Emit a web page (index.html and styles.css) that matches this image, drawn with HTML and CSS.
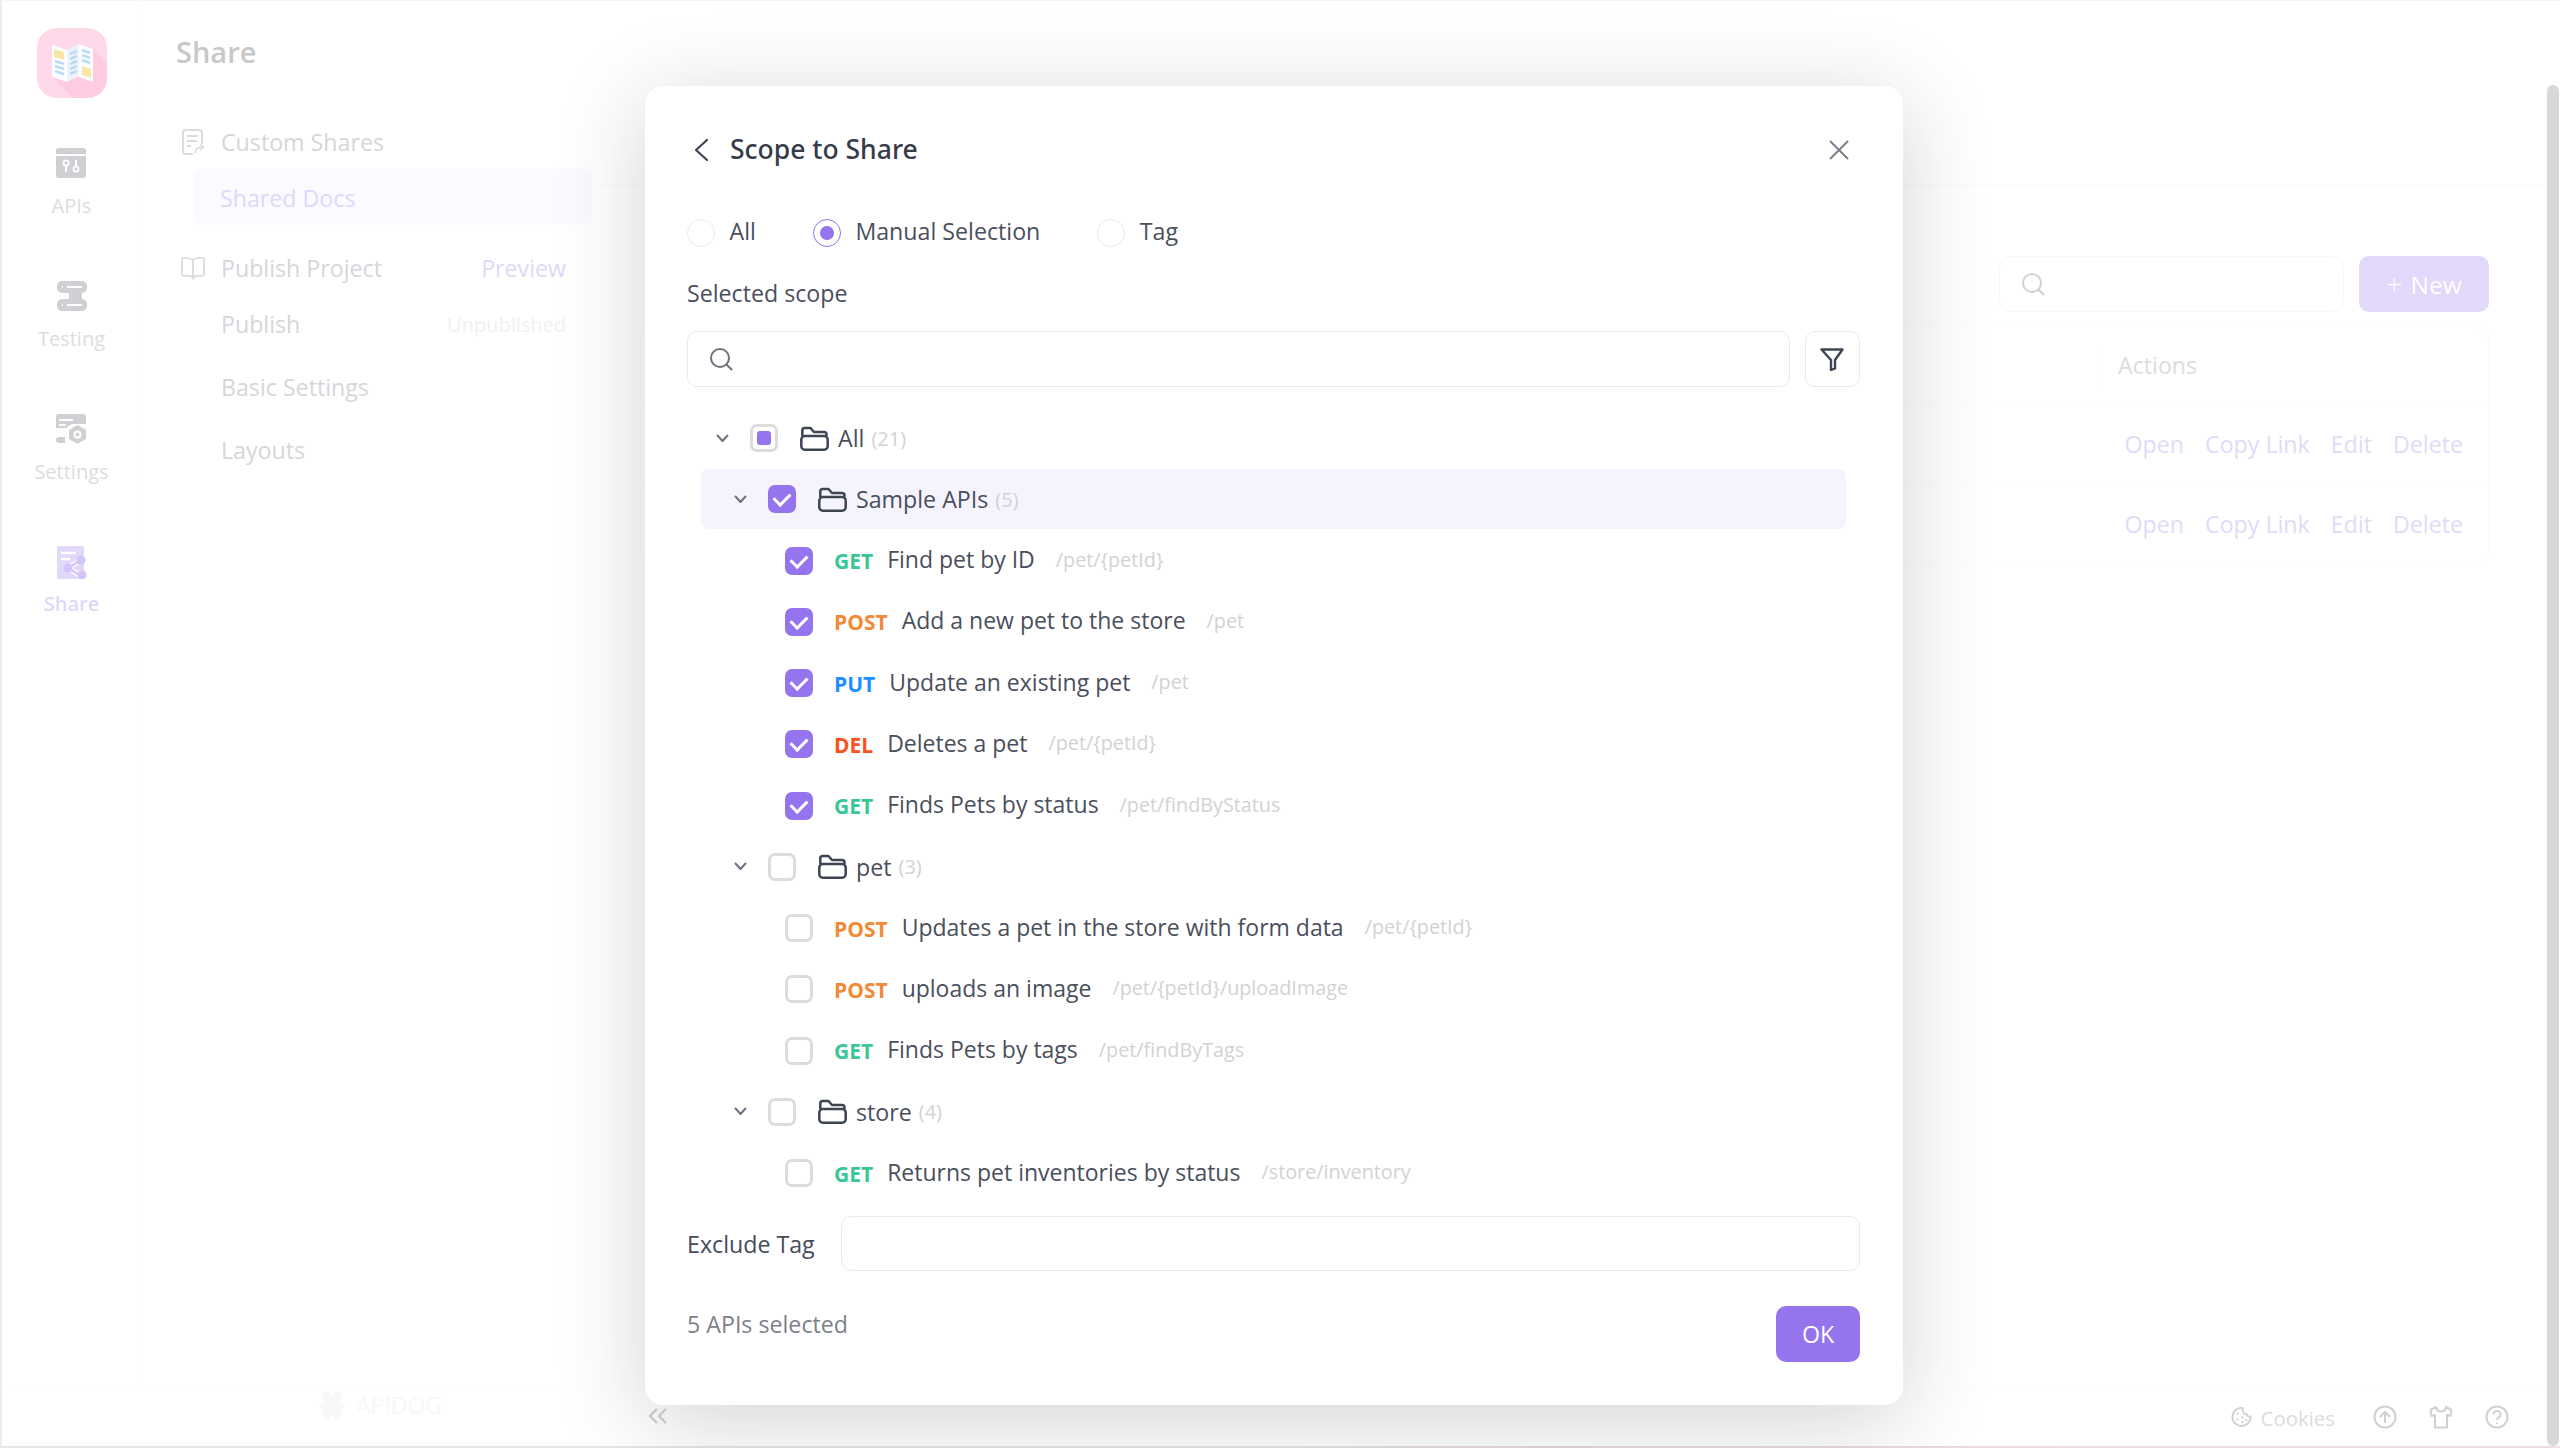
FILE: index.html
```html
<!DOCTYPE html>
<html lang="en">
<head>
    <meta charset="UTF-8">
    <title>Share - Scope to Share</title>
    <link rel="stylesheet" href="styles.css">
</head>
<body>
    <svg class="sprites" width="0" height="0">
        <symbol id="i-caret" viewBox="0 0 13 9"><path d="M1.5 1.5 6.5 7l5-5.5" fill="none" stroke="currentColor" stroke-width="2" stroke-linecap="round" stroke-linejoin="round"/></symbol>
        <symbol id="i-folder" viewBox="0 0 29 25"><path d="M2.3 10V4.5A2.5 2.5 0 0 1 4.800 2h5.700l3.500 4h10a2.500 2.500 0 0 1 2.500 2.500V10" fill="none" stroke="currentColor" stroke-width="2.500" stroke-linejoin="round"/><rect x="1.300" y="10" width="26.400" height="13.700" rx="3.500" fill="none" stroke="currentColor" stroke-width="2.500"/></symbol>
        <symbol id="i-search" viewBox="0 0 24 24"><circle cx="11" cy="11" r="9" fill="none" stroke="currentColor" stroke-width="2"/><path d="m17.500 17.500 5 5" fill="none" stroke="currentColor" stroke-width="2" stroke-linecap="round"/></symbol>
    </svg>

    <div class="window">
        <div class="app">
            <!-- Barra de iconos -->
            <nav class="rail">
                <svg class="logo" viewBox="0 0 70 70">
                    <rect width="70" height="70" rx="20" fill="#ffd8e9"/>
                    <path d="M56 21 70 36V50A20 20 0 0 1 50 70H36L15 49Z" fill="#ffcbe1"/>
                    <path d="M15 17 30 22V54L15 49Z" fill="#fbfdff"/>
                    <path d="M30 22 42 16V48L30 54Z" fill="#eef3f8"/>
                    <path d="M42 16 56 21V54L42 49Z" fill="#fbfdff"/>
                    <path d="M17 21 27 24V32L17 29Z" fill="#fbe6a8"/>
                    <path d="M45 38 54 41V50L45 47Z" fill="#fbe6a8"/>
                    <path d="M18 33 27 36M18 38 27 41M18 43 27 46M33 26 40 23M33 31 40 28M33 36 40 33M33 41 40 38M33 46 40 43M45 22 53 25M45 27 53 30M45 32 53 35" stroke="#b9dcf6" stroke-width="2.500"/>
                </svg>
                <a class="rail-item">
                    <svg class="rail-icon" viewBox="0 0 30 30">
                        <path d="M3 0h24a3 3 0 0 1 3 3v3H0V3a3 3 0 0 1 3-3ZM0 8h30v19a3 3 0 0 1-3 3H3a3 3 0 0 1-3-3Z" fill="currentColor"/>
                        <circle cx="10" cy="15" r="2.600" fill="none" stroke="#fff" stroke-width="1.800"/>
                        <path d="M10 18v6M20 12v6" stroke="#fff" stroke-width="2"/>
                        <circle cx="20" cy="21" r="2.600" fill="none" stroke="#fff" stroke-width="1.800"/>
                    </svg>
                    <span>APIs</span>
                </a>
                <a class="rail-item">
                    <svg class="rail-icon" viewBox="0 0 30 30">
                        <rect width="30" height="12" rx="5" fill="currentColor"/>
                        <rect y="18" width="30" height="12" rx="5" fill="currentColor"/>
                        <path d="M12 11h13v8H12z" fill="currentColor"/>
                        <path d="M5 6h1M10 6h15M5 24h1M10 24h15" stroke="#fff" stroke-width="2"/>
                    </svg>
                    <span>Testing</span>
                </a>
                <a class="rail-item">
                    <svg class="rail-icon" viewBox="0 0 30 30">
                        <path d="M3 0h24a3 3 0 0 1 3 3v7H16l-5 3v1H0V3a3 3 0 0 1 3-3Z" fill="currentColor"/>
                        <path d="M3 6h14M3 11h7" stroke="#fff" stroke-width="2"/>
                        <path d="M3 23h6v6H3a3 3 0 0 1 0-6Z" fill="currentColor"/>
                        <path d="M21.500 11 30 16v9l-8.500 5-8.500-5v-9Z" fill="currentColor"/>
                        <circle cx="21.500" cy="20.500" r="3" fill="none" stroke="#fff" stroke-width="2"/>
                    </svg>
                    <span>Settings</span>
                </a>
                <a class="rail-item rail-item-active">
                    <svg class="rail-icon rail-icon-tall" viewBox="0 0 30 33">
                        <path d="M2 0h23a2 2 0 0 1 2 2v31H2a2 2 0 0 1-2-2V2a2 2 0 0 1 2-2Z" fill="#e2d8f9"/>
                        <path d="M4 7h15M4 13h9" stroke="#fff" stroke-width="2.400"/>
                        <path d="M24 14 11 22l13 8" fill="none" stroke="#fff" stroke-width="5"/>
                        <path d="M24 14 11 22l13 8" fill="none" stroke="#d5c4f8" stroke-width="2.400"/>
                        <circle cx="24" cy="14" r="4.500" fill="#d5c4f8"/>
                        <circle cx="11" cy="22" r="4.500" fill="#d5c4f8"/>
                        <circle cx="25" cy="29" r="4.500" fill="#d5c4f8"/>
                    </svg>
                    <span>Share</span>
                </a>
            </nav>

            <!-- Menu secundario -->
            <aside class="subnav">
                <h1 class="subnav-title">Share</h1>
                <div class="subnav-group">
                    <svg class="subnav-icon" viewBox="0 0 24 26" fill="none" stroke="currentColor" stroke-width="2">
                        <path d="M12 25H5a3 3 0 0 1-3-3V4a3 3 0 0 1 3-3h13a3 3 0 0 1 3 3v11" stroke-linejoin="round"/>
                        <path d="M6 7h11M6 12h10M6 17h4"/>
                        <path d="M14 24c0-4 3-6 8-6m-3-3 3.500 3-3.500 3" stroke-width="1.600"/>
                    </svg>
                    <span>Custom Shares</span>
                </div>
                <div class="subnav-row subnav-row-active">Shared Docs</div>
                <div class="subnav-group subnav-group-publish">
                    <svg class="subnav-icon" viewBox="0 0 26 25" fill="none" stroke="currentColor" stroke-width="2">
                        <path d="M13 4C11 2 8 1.500 4 1.500H3a2 2 0 0 0-2 2V19a2 2 0 0 0 2 2h6c2 0 3 .5 4 3 1-2.500 2-3 4-3h6a2 2 0 0 0 2-2V3.500a2 2 0 0 0-2-2h-1c-4 0-7 .5-9 2.500Zm0 0v20" stroke-linejoin="round"/>
                    </svg>
                    <span>Publish Project</span>
                    <a class="subnav-side subnav-link">Preview</a>
                </div>
                <div class="subnav-row subnav-row-publish">Publish <span class="subnav-side subnav-muted">Unpublished</span></div>
                <div class="subnav-row">Basic Settings</div>
                <div class="subnav-row">Layouts</div>
                <div class="brand">
                    <svg class="brand-icon" viewBox="0 0 30 32">
                        <path d="M15 9C13 4 10 1 7 3S5 9 8 12L3 15c-2 1-2 3 0 4l5 2c-3 3-4 7-1 9s6-1 8-6c2 5 5 8 8 6s2-6-1-9l5-2c2-1 2-3 0-4l-5-3c3-3 4-7 1-9s-6 1-8 6Z" fill="currentColor"/>
                    </svg>
                    <span>APIDOG</span>
                </div>
            </aside>

            <!-- Contenido principal, atenuado detras del dialogo -->
            <main class="content">
                <div class="toolbar">
                    <div class="toolbar-search"><svg class="icon-search" aria-hidden="true"><use href="#i-search"/></svg></div>
                    <button class="new-btn"><span class="new-plus">+</span> New</button>
                </div>
                <div class="docs-table">
                    <div class="docs-head"><span class="docs-actions-title">Actions</span></div>
                    <div class="docs-row">
                        <a>Open</a><a>Copy Link</a><a>Edit</a><a>Delete</a>
                    </div>
                    <div class="docs-row">
                        <a>Open</a><a>Copy Link</a><a>Edit</a><a>Delete</a>
                    </div>
                </div>
            </main>
        </div>

        <footer class="statusbar">
            <svg class="status-icon status-cookie" viewBox="0 0 22 22" fill="none" stroke="currentColor" stroke-width="2">
                <path d="M12 2a9.500 9.500 0 1 0 8.500 9c-2 .5-3.500-.5-4-2.500C14 9 12 7 12 2Z" stroke-linejoin="round"/>
                <path d="M7 8h.1M6.500 14h.1M11.500 12h.1M12 17h.1M16 15h.1" stroke-width="2.400" stroke-linecap="round"/>
            </svg>
            <span class="status-text">Cookies</span>
            <svg class="status-icon" viewBox="0 0 24 24" fill="none" stroke="currentColor" stroke-width="2">
                <circle cx="12" cy="12" r="10.500"/><path d="M12 18V7m-5 5 5-5 5 5"/>
            </svg>
            <svg class="status-icon" viewBox="0 0 24 24" fill="none" stroke="currentColor" stroke-width="2" stroke-linejoin="round">
                <path d="M7 2 1.500 5l1 6L6 10v12.500h12V10l3.500 1 1-6L17 2c-.5 3-2 4.500-5 4.500S7.500 5 7 2Z"/>
            </svg>
            <svg class="status-icon" viewBox="0 0 24 24" fill="none" stroke="currentColor" stroke-width="2">
                <circle cx="12" cy="12" r="10.500"/><path d="M8.500 9.500a3.500 3.500 0 1 1 5 3c-1 .6-1.500 1-1.500 2.500M12 17.500v1.500"/>
            </svg>
        </footer>
        <div class="scroll-thumb"></div>
    </div>
    <div class="bottom-edge"></div>

    <!-- Dialogo -->
    <section class="modal">
        <header class="modal-head">
            <svg class="modal-back" viewBox="0 0 16 24"><path d="M14 2 3 12l11 10" fill="none" stroke="currentColor" stroke-width="2.200" stroke-linecap="round" stroke-linejoin="round"/></svg>
            <h2 class="modal-title">Scope to Share</h2>
            <svg class="modal-close" viewBox="0 0 22 22"><path d="M2 2l18 18M20 2 2 20" fill="none" stroke="currentColor" stroke-width="2"/></svg>
        </header>

        <div class="radios">
            <label class="radio"><i class="radio-dot"></i>All</label>
            <label class="radio"><i class="radio-dot radio-dot-on"></i>Manual Selection</label>
            <label class="radio"><i class="radio-dot"></i>Tag</label>
        </div>

        <div class="field-label">Selected scope</div>
        <div class="search-row">
            <div class="search-box"><svg class="icon-search" aria-hidden="true"><use href="#i-search"/></svg></div>
            <button class="filter-btn">
                <svg viewBox="0 0 24 24" width="24" height="24"><path d="M1.500 2.500h21L15 13v8.500l-4 1.500V13Z" fill="none" stroke="#3d4454" stroke-width="2.400" stroke-linejoin="round"/></svg>
            </button>
        </div>

        <div class="tree">
            <div class="row level-0">
                <svg class="caret"><use href="#i-caret"/></svg>
                <i class="check check-part"></i>
                <svg class="folder"><use href="#i-folder"/></svg>
                <span class="name">All</span><span class="count">(21)</span>
            </div>
            <div class="row level-1 row-active">
                <svg class="caret"><use href="#i-caret"/></svg>
                <i class="check check-on"></i>
                <svg class="folder"><use href="#i-folder"/></svg>
                <span class="name">Sample APIs</span><span class="count">(5)</span>
            </div>
            <div class="row level-2">
                <i class="check check-on"></i><b class="method get">GET</b>
                <span class="title">Find pet by ID</span><span class="path">/pet/{petId}</span>
            </div>
            <div class="row level-2">
                <i class="check check-on"></i><b class="method post">POST</b>
                <span class="title">Add a new pet to the store</span><span class="path">/pet</span>
            </div>
            <div class="row level-2">
                <i class="check check-on"></i><b class="method put">PUT</b>
                <span class="title">Update an existing pet</span><span class="path">/pet</span>
            </div>
            <div class="row level-2">
                <i class="check check-on"></i><b class="method del">DEL</b>
                <span class="title">Deletes a pet</span><span class="path">/pet/{petId}</span>
            </div>
            <div class="row level-2">
                <i class="check check-on"></i><b class="method get">GET</b>
                <span class="title">Finds Pets by status</span><span class="path">/pet/findByStatus</span>
            </div>
            <div class="row level-1">
                <svg class="caret"><use href="#i-caret"/></svg>
                <i class="check"></i>
                <svg class="folder"><use href="#i-folder"/></svg>
                <span class="name">pet</span><span class="count">(3)</span>
            </div>
            <div class="row level-2">
                <i class="check"></i><b class="method post">POST</b>
                <span class="title">Updates a pet in the store with form data</span><span class="path">/pet/{petId}</span>
            </div>
            <div class="row level-2">
                <i class="check"></i><b class="method post">POST</b>
                <span class="title">uploads an image</span><span class="path">/pet/{petId}/uploadImage</span>
            </div>
            <div class="row level-2">
                <i class="check"></i><b class="method get">GET</b>
                <span class="title">Finds Pets by tags</span><span class="path">/pet/findByTags</span>
            </div>
            <div class="row level-1">
                <svg class="caret"><use href="#i-caret"/></svg>
                <i class="check"></i>
                <svg class="folder"><use href="#i-folder"/></svg>
                <span class="name">store</span><span class="count">(4)</span>
            </div>
            <div class="row level-2">
                <i class="check"></i><b class="method get">GET</b>
                <span class="title">Returns pet inventories by status</span><span class="path">/store/inventory</span>
            </div>
        </div>

        <div class="exclude">
            <span class="exclude-label">Exclude Tag</span>
            <div class="exclude-input"></div>
        </div>

        <div class="modal-foot">
            <span class="selected-count">5 APIs selected</span>
            <button class="ok-btn">OK</button>
        </div>
    </section>

    <svg class="collapse" viewBox="0 0 20 16"><path d="M9 1 2 8l7 7M18 1l-7 7 7 7" fill="none" stroke="currentColor" stroke-width="2.200"/></svg>
</body>
</html>
```

FILE: styles.css
```css
* {
    box-sizing: border-box;
}
body {
    margin: 0;
    width: 2560px;
    height: 1448px;
    overflow: hidden;
    position: relative;
    background-color: #fff;
    font-family: "Open Sans", "Noto Sans", sans-serif;
    font-size: 23.2px;
    color: #454b5a;
}
.sprites {
    position: absolute;
}
h1, h2 {
    margin: 0;
}
button {
    font-family: inherit;
    border: none;
}

.window {
    position: relative;
    height: 1446px;
    display: flex;
    flex-direction: column;
    border-left: 2px solid #ececec;
    border-top: 1px solid #f6f6f6;
}
.app {
    flex: 1;
    display: flex;
    min-height: 0;
}
.bottom-edge {
    height: 2px;
    background: linear-gradient(90deg, #e6e6e6 0%, #e6e6e6 50%, #e6d8dd 60%, #efdfe5 100%);
}

/* Barra de iconos */
.rail {
    width: 140px;
    flex-shrink: 0;
    display: flex;
    flex-direction: column;
    align-items: center;
    padding-top: 27px;
    border-right: 1px solid #fcfcfc;
}
.logo {
    width: 70px;
    height: 70px;
    margin-bottom: 50px;
}
.rail-item {
    height: 133px;
    display: flex;
    flex-direction: column;
    align-items: center;
    font-size: 20px;
    line-height: 28px;
    color: #dcdce0;
}
.rail-icon {
    width: 30px;
    height: 30px;
    margin-bottom: 14px;
    color: #cfd0d4;
}
.rail-icon-tall {
    height: 33px;
    margin-bottom: 11px;
    margin-top: -1px;
}
.rail-item-active {
    color: #e0d7fa;
    font-weight: 600;
}

/* Menu secundario */
.subnav {
    width: 458px;
    flex-shrink: 0;
    position: relative;
    padding: 31px 34px 0 39px;
    color: #d6d6da;
}
.subnav-title {
    font-size: 29px;
    line-height: 40px;
    font-weight: 600;
    color: #c8c8ca;
    margin: 0 0 -1px -5px;
    padding-bottom: 54px;
}
.subnav-group {
    display: flex;
    align-items: center;
    height: 34px;
    position: relative;
    padding-left: 40px;
}
.subnav-group-publish {
    margin-top: 26px;
}
.subnav-icon {
    position: absolute;
    left: 0;
    width: 24px;
    height: 26px;
    color: #dcdcdf;
}
.subnav-row {
    display: flex;
    align-items: center;
    justify-content: space-between;
    height: 56px;
    margin-top: 7px;
    padding-left: 40px;
    color: #d6d6da;
}
.subnav-row-active {
    margin: 10px -26px 0 12px;
    padding: 2px 0 0 27px;
    background-color: #fbfaff;
    border-radius: 8px;
    color: #e0d7fa;
}
.subnav-row-publish {
    margin-top: 11px;
}
.subnav-side {
    margin-left: auto;
}
.subnav-link {
    color: #e0d7fa;
}
.subnav-muted {
    font-size: 20px;
    color: #f1f1f2;
}
.brand {
    position: absolute;
    left: 175px;
    bottom: -35px;
    display: flex;
    align-items: center;
    gap: 9px;
    font-size: 23px;
    color: #f8f8f8;
}
.brand-icon {
    width: 30px;
    height: 32px;
}

/* Contenido principal */
.content {
    flex: 1;
    min-width: 0;
    padding: 0 71px 0 40px;
    display: flex;
    flex-direction: column;
    background: linear-gradient(#fff 183px, #fafafa 183px, #fafafa 184px, #fff 184px);
}
.toolbar {
    display: flex;
    justify-content: flex-end;
    gap: 15px;
    margin-top: 255px;
}
.toolbar-search {
    width: 345px;
    height: 56px;
    display: flex;
    align-items: center;
    padding-left: 21px;
    border: 1px solid #f8f8f8;
    border-radius: 12px;
    color: #d0d0d2;
}
.icon-search {
    width: 24px;
    height: 24px;
}
.new-btn {
    width: 130px;
    height: 56px;
    background-color: #e2d8f9;
    color: #fff;
    border-radius: 10px;
    font-size: 24.5px;
    padding: 0;
}
.new-plus {
    font-size: 28px;
    font-weight: 300;
    line-height: 20px;
    margin-right: 2px;
}
.docs-table {
    margin-top: 15px;
    border: 1px solid #fbfbfb;
    border-radius: 10px;
}
.docs-head {
    height: 78px;
    display: flex;
    align-items: center;
    justify-content: flex-end;
    border-bottom: 1px solid #fbfbfb;
}
.docs-actions-title {
    width: 386px;
    height: 40px;
    line-height: 36px;
    padding-left: 15px;
    border-left: 1px solid #fbfbfb;
    color: #dcdcdc;
}
.docs-row {
    height: 79px;
    display: flex;
    align-items: center;
    justify-content: flex-end;
    gap: 21px;
    padding: 0 25px 2px 0;
    color: #e2daf9;
    border-bottom: 1px solid #fbfbfb;
}
.docs-row:last-child {
    border-bottom: none;
}

/* Pie */
.statusbar {
    height: 60px;
    flex-shrink: 0;
    display: flex;
    align-items: center;
    justify-content: flex-end;
    padding-right: 51px;
    border-top: 1px solid #fcfcfc;
    color: #d0d1d4;
}
.status-icon {
    width: 24px;
    height: 24px;
    margin-left: 32px;
}
.status-cookie {
    width: 21px;
    height: 21px;
}
.status-text {
    font-size: 20.4px;
    margin-left: 9px;
    padding-top: 3px;
    color: #dcdce0;
}
.status-text + .status-icon {
    margin-left: 38px;
}
.scroll-thumb {
    position: absolute;
    right: 1px;
    top: 84px;
    bottom: 0;
    width: 12px;
    background-color: #d8d8d8;
    border-radius: 6px;
}

/* Dialogo */
.modal {
    position: absolute;
    left: 645px;
    top: 86px;
    width: 1258px;
    height: 1319px;
    padding: 44px 43px 0 42px;
    background-color: #fff;
    border-radius: 18px;
    box-shadow: 0 16px 90px rgba(30, 35, 45, 0.2);
}
.modal-head {
    height: 40px;
    display: flex;
    align-items: center;
}
.modal-back {
    width: 16px;
    height: 24px;
    margin-left: 6px;
    margin-right: 21px;
    color: #3d4454;
}
.modal-title {
    font-size: 26.5px;
    font-weight: 500;
    font-family: "Noto Sans", sans-serif;
    color: #363b4a;
    flex: 1;
    margin-bottom: 2px;
}
.modal-close {
    width: 22px;
    height: 22px;
    margin-right: 10px;
    color: #7d808a;
}
.radios {
    display: flex;
    margin-top: 48px;
    gap: 57px;
    height: 29px;
}
.radio {
    display: flex;
    align-items: center;
    gap: 14.5px;
    padding-bottom: 3px;
    color: #4a4f5c;
}
.radio-dot {
    width: 28px;
    height: 28px;
    margin-top: 3px;
    border: 1px solid #ebebee;
    border-radius: 50%;
    display: flex;
    align-items: center;
    justify-content: center;
}
.radio-dot-on {
    border-color: #9574ee;
}
.radio-dot-on::after {
    content: "";
    width: 14px;
    height: 14px;
    border-radius: 50%;
    background-color: #9574ee;
}
.field-label {
    margin-top: 30px;
    line-height: 32px;
    color: #4a4f5c;
}
.search-row {
    display: flex;
    gap: 15px;
    margin-top: 22px;
    height: 56px;
}
.search-box {
    flex: 1;
    display: flex;
    align-items: center;
    padding-left: 21px;
    border: 1.5px solid #ebebee;
    border-radius: 10px;
    color: #6e7280;
}
.filter-btn {
    width: 55px;
    display: flex;
    align-items: center;
    justify-content: center;
    background-color: #fff;
    border: 1.5px solid #ebebee;
    border-radius: 10px;
    padding: 0 2px 0 0;
}

/* Arbol */
.tree {
    margin: 21px 14px 0 14px;
}
.row {
    display: flex;
    align-items: center;
    height: 60px;
    margin-bottom: 1.25px;
    white-space: nowrap;
    border-radius: 8px;
}
.row-active {
    background-color: #f5f3fe;
}
.level-0 {
    padding-left: 15px;
}
.level-1 {
    padding-left: 33px;
}
.level-2 {
    padding-left: 84px;
}
.caret {
    width: 13px;
    height: 9px;
    margin-right: 21px;
    color: #6e7280;
}
.check {
    width: 28px;
    height: 28px;
    flex-shrink: 0;
    margin-right: 22px;
    border: 3px solid #dcdcdc;
    border-radius: 7px;
    display: flex;
    align-items: center;
    justify-content: center;
}
.level-2 .check {
    margin-right: 21px;
}
.check-on {
    background-color: #9574ee;
    border-color: #9574ee;
}
.check-on::after {
    content: "";
    width: 13px;
    height: 8px;
    margin-top: -3px;
    border-left: 3px solid #fff;
    border-bottom: 3px solid #fff;
    transform: rotate(-45deg);
}
.check-part::after {
    content: "";
    width: 14px;
    height: 14px;
    background-color: #9574ee;
    border-radius: 3px;
}
.folder {
    width: 29px;
    height: 25px;
    margin-right: 9px;
    color: #3d4454;
}
.name {
    color: #4a4f5c;
}
.count {
    margin-left: 7px;
    font-size: 20px;
    color: #d2d2d4;
}
.method {
    font-size: 21px;
    font-weight: 700;
    margin-right: 14px;
    padding-top: 1px;
}
.get {
    color: #3ac795;
}
.post {
    color: #f08a36;
}
.put {
    color: #1f8fff;
}
.del {
    color: #f9521f;
}
.title {
    margin-top: -3px;
    font-size: 23px;
    color: #4a4f5c;
}
.path {
    margin-top: -3px;
    margin-left: 21px;
    font-size: 19.8px;
    color: #d2d2d4;
}

/* Pie del dialogo */
.exclude {
    display: flex;
    align-items: center;
    margin-top: 13px;
    height: 55px;
}
.exclude-label {
    width: 154px;
    color: #454b5a;
}
.exclude-input {
    flex: 1;
    height: 55px;
    border: 1.5px solid #ebebee;
    border-radius: 10px;
}
.modal-foot {
    display: flex;
    justify-content: space-between;
    margin-top: 35px;
}
.selected-count {
    line-height: 36px;
    color: #7d808a;
}
.ok-btn {
    width: 84px;
    height: 56px;
    background-color: #9574ee;
    color: #fff;
    font-size: 23.2px;
    border-radius: 10px;
}
.collapse {
    position: absolute;
    left: 648px;
    top: 1408px;
    width: 20px;
    height: 16px;
    color: #c4c4c8;
}
```
